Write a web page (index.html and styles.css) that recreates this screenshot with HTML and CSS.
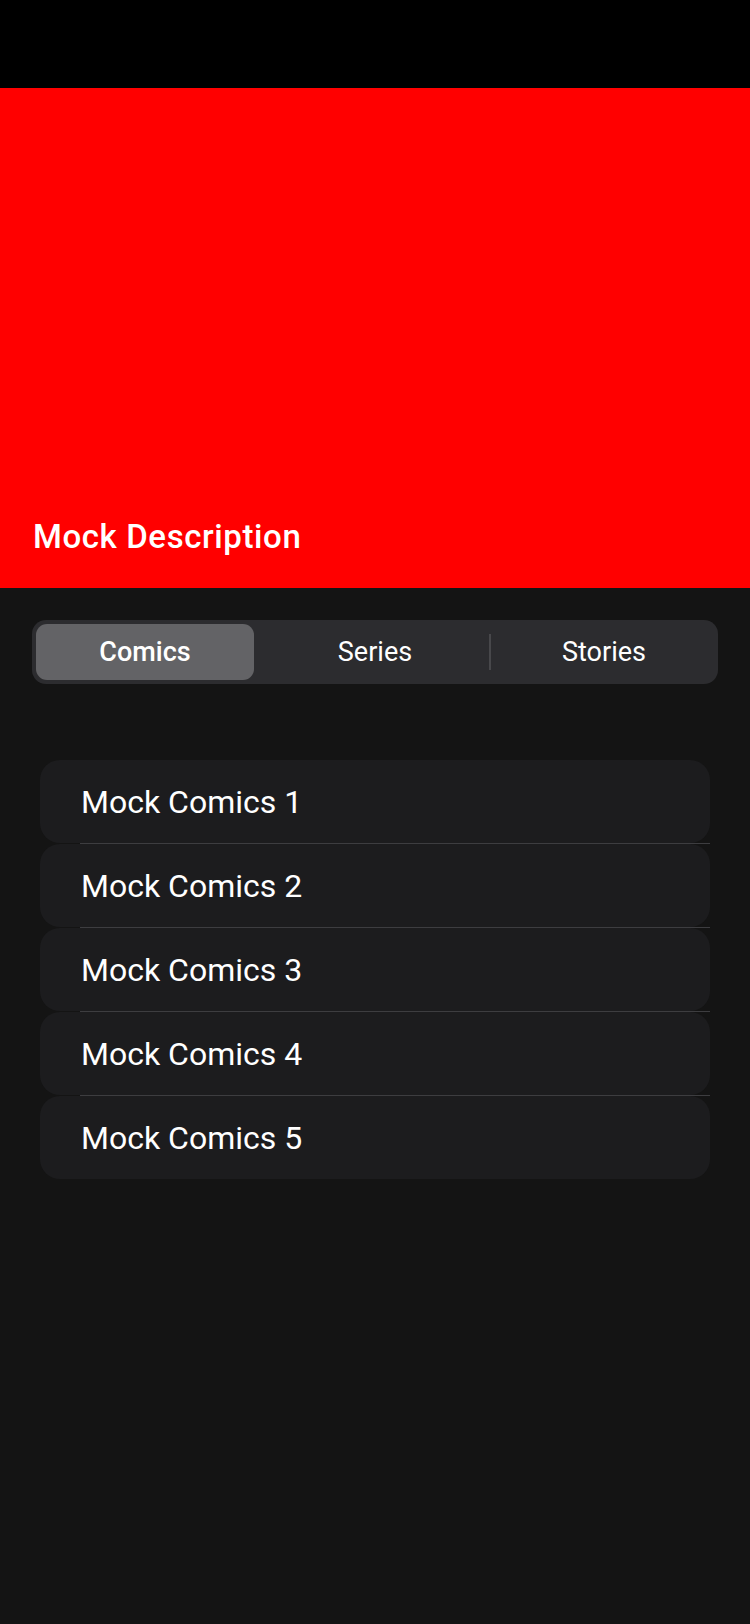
FILE: index.html
```html
<!DOCTYPE html>
<html lang="en">
<head>
<meta charset="utf-8">
<title>Mock Detail</title>
<link rel="stylesheet" href="styles.css">
</head>
<body>
<div class="screen">
  <div class="statusbar"></div>
  <header class="hero">
    <h1 class="hero-title">Mock Description</h1>
  </header>
  <div class="segmented">
    <div class="segment selected">Comics</div>
    <div class="segment">Series</div>
    <div class="segment divided">Stories</div>
  </div>
  <ul class="list">
    <li class="row"><div class="card">Mock Comics 1</div><div class="sep"></div></li>
    <li class="row"><div class="card">Mock Comics 2</div><div class="sep"></div></li>
    <li class="row"><div class="card">Mock Comics 3</div><div class="sep"></div></li>
    <li class="row"><div class="card">Mock Comics 4</div><div class="sep"></div></li>
    <li class="row last"><div class="card">Mock Comics 5</div></li>
  </ul>
</div>
</body>
</html>
```
FILE: styles.css
```css
* { box-sizing: border-box; }
html, body {
  margin: 0;
  padding: 0;
  background: #141414;
}
body {
  font-family: Roboto, "Liberation Sans", Arial, sans-serif;
  color: #ffffff;
}
.screen {
  width: 750px;
  min-height: 1624px;
  background: #141414;
}
.statusbar {
  height: 88px;
  background: #000000;
}
.hero {
  height: 500px;
  background: #ff0000;
  display: flex;
  align-items: flex-end;
  padding: 0 0 32px 33px;
}
.hero-title {
  margin: 0;
  font-size: 33px;
  line-height: 38px;
  font-weight: 500;
  letter-spacing: 0.6px;
  color: #ffffff;
}
.segmented {
  margin: 32px 32px 0 32px;
  height: 64px;
  border-radius: 14px;
  background: #2c2c2f;
  padding: 4px;
  display: grid;
  grid-template-columns: 1fr 1fr 1fr;
}
.segment {
  position: relative;
  display: flex;
  align-items: center;
  justify-content: center;
  font-size: 27px;
  font-weight: 400;
  color: #ffffff;
  border-radius: 11px;
}
.segment.selected {
  background: #636366;
  font-weight: 500;
  margin-right: 8px;
}
.segment.divided {
  padding-left: 6px;
}
.segment.divided::before {
  content: "";
  position: absolute;
  left: 1px;
  top: 10px;
  bottom: 10px;
  width: 2px;
  background: #48484b;
}
.list {
  list-style: none;
  margin: 76px 40px 0 40px;
  padding: 0;
}
.row {
  display: block;
}
.card {
  height: 83px;
  background: #1c1c1e;
  border-radius: 20px;
  display: flex;
  align-items: center;
  padding-left: 41px;
  font-size: 32px;
  font-weight: 400;
  color: #ffffff;
}
.sep {
  height: 1px;
  margin-left: 40px;
  background: #3d3d40;
}
```
